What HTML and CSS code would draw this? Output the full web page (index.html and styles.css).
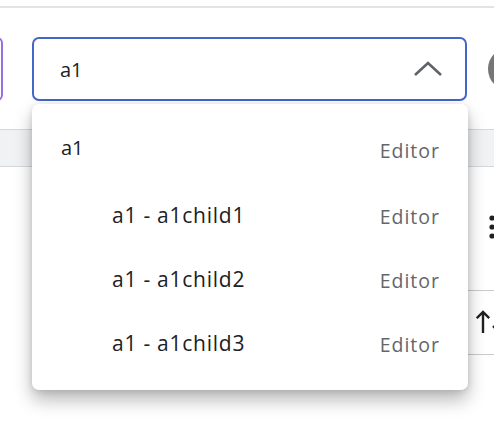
FILE: index.html
```html
<!DOCTYPE html>
<html>
<head>
<meta charset="utf-8">
<link rel="stylesheet" href="styles.css">
</head>
<body>
<div class="page">
  <div class="topbar"></div>
  <div class="toolbar">
    <div class="purple-btn"></div>
    <div class="select">
      <span class="select-value">a1</span>
      <svg class="chev" width="30" height="16" viewBox="0 0 30 16"><path d="M2 14 L15 2 L28 14" fill="none" stroke="#5f6368" stroke-width="2.6"/></svg>
    </div>
    <div class="avatar"></div>
  </div>
  <div class="table">
    <div class="thead"></div>
    <div class="row row-tall">
      <svg class="dots" width="8" height="24" viewBox="0 0 8 24"><circle cx="4" cy="3" r="2.6" fill="#202124"/><circle cx="4" cy="12" r="2.6" fill="#202124"/><circle cx="4" cy="21" r="2.6" fill="#202124"/></svg>
    </div>
    <div class="row row-short">
      <svg class="sort" width="30" height="24" viewBox="0 0 30 24"><path d="M7 23 V2 M0.8 8.2 L7 2 L13.2 8.2" fill="none" stroke="#202124" stroke-width="2.4"/><path d="M22 2 V21 M17 16 L22 21 L27 16" fill="none" stroke="#202124" stroke-width="2.4"/></svg>
    </div>
  </div>
  <div class="menu">
    <div class="item top"><span class="name">a1</span><span class="role">Editor</span></div>
    <div class="item child"><span class="name">a1 - a1child1</span><span class="role">Editor</span></div>
    <div class="item child"><span class="name">a1 - a1child2</span><span class="role">Editor</span></div>
    <div class="item child"><span class="name">a1 - a1child3</span><span class="role">Editor</span></div>
  </div>
</div>
</body>
</html>
```
FILE: styles.css
```css
html, body { margin: 0; padding: 0; background: #fff; }
body { font-family: "Open Sans", "Noto Sans", sans-serif; color: #202124; width: 494px; height: 422px; overflow: hidden; }
.page { position: relative; width: 494px; height: 422px; overflow: hidden; }
.topbar { height: 6px; border-bottom: 2px solid #e3e3e3; }
.toolbar { display: flex; align-items: center; height: 64px; margin-top: 29px; }
.purple-btn { width: 40px; height: 60px; margin-left: -41px; border: 2px solid #9a6ee0; border-radius: 6px; flex: none; }
.select { flex: none; width: 435px; height: 64px; margin-left: 29px; border: 2.5px solid #4466c6; border-radius: 7px; display: flex; align-items: center; justify-content: space-between; padding: 0 22px 0 26px; box-sizing: border-box; }
.select-value { font-size: 20px; }
.chev { display: block; margin-top: -1px; }
.avatar { flex: none; width: 44px; height: 44px; border-radius: 50%; background: #767676; margin-left: 21px; }
.table { margin-top: 28px; }
.thead { height: 36px; background: #f1f2f4; border-top: 1px solid #d6d8dc; border-bottom: 1px solid #d6d8dc; }
.row { display: flex; justify-content: flex-end; align-items: center; margin-left: 300px; margin-right: -20px; border-bottom: 1px solid #c9ccd0; }
.row-tall { height: 123px; }
.row-short { height: 63px; }
.dots { display: block; margin-right: 18px; margin-top: -4px; }
.sort { display: block; margin-right: 8px; margin-top: -2px; }
.menu { position: absolute; left: 32px; top: 104px; width: 436px; height: 286px; background: #fff; border-radius: 7px; box-shadow: 0 10px 18px rgba(0,0,0,0.28), 0 1px 6px rgba(0,0,0,0.12); padding-top: 18px; box-sizing: border-box; }
.item { height: 65px; display: flex; justify-content: space-between; align-items: center; padding: 0 29px 0 29px; margin-top: -1px; }
.item .name { font-size: 20px; }
.item .role { font-size: 19.5px; color: #62666c; letter-spacing: 1px; margin-right: -1px; }
.item.top .name { margin-top: -13px; }
.item.top .role { margin-top: -7px; }
.item.child { padding-left: 80px; }
.item.child .name { font-size: 21px; letter-spacing: 0.75px; margin-top: -6px; }
.item.child .role { margin-top: -2px; }
```
